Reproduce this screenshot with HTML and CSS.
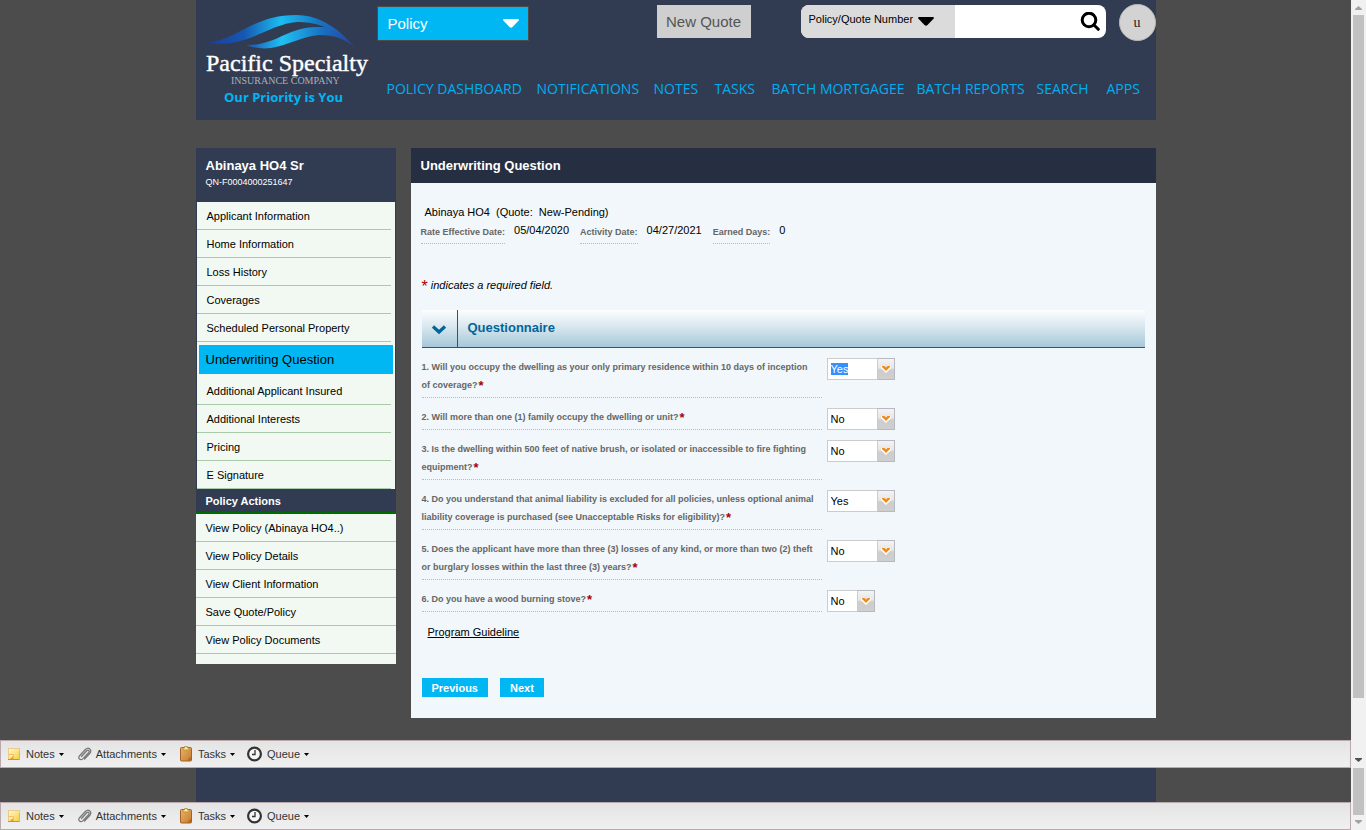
FILE: index.html
```html
<!DOCTYPE html>
<html lang="en">
<head>
<meta charset="utf-8">
<title>Underwriting Question</title>
<link rel="stylesheet" href="styles.css">
</head>
<body>
<svg class="defs" aria-hidden="true">
  <defs>
    <linearGradient id="noteFill" x1="0" y1="0" x2="1" y2="1"><stop offset="0" stop-color="#fffbd8"/><stop offset="1" stop-color="#f5cf3c"/></linearGradient>
    <linearGradient id="boardFill" x1="0" y1="0" x2="1" y2="1"><stop offset="0" stop-color="#e9b566"/><stop offset="1" stop-color="#c57c2c"/></linearGradient>
  </defs>
  <symbol id="i-note" viewBox="0 0 16 16">
    <rect x="2.5" y="2.5" width="11" height="11" fill="url(#noteFill)" stroke="#f0c988"/>
    <path d="M2 13.500h12" stroke="#e58a1c"/><path d="M13.500 5v9" stroke="#eeb25a"/>
    <path d="M2.500 8.500h5V13" fill="#fff3b0" stroke="#f0bf62"/>
    <path d="M4 13l3-3v3z" fill="#ef9f2e"/>
  </symbol>
  <symbol id="i-clip" viewBox="0 0 16 16">
    <path d="M5.500 10.500l5.200-5.700c1.600-1.500 3.300.2 1.900 1.800L7 12.600c-2.500 2.500-5.700-.2-3.400-2.900L9.400 3.500c2.900-3 7.300.2 4.500 3.700L8.500 13" fill="none" stroke="#777" stroke-width="1.300" stroke-linecap="round"/>
  </symbol>
  <symbol id="i-board" viewBox="0 0 16 16">
    <rect x="2.500" y="1.500" width="11" height="13.500" rx="1" fill="url(#boardFill)" stroke="#a4622a"/>
    <path d="M5 4V2h1.500V.5h3V2H11v2z" fill="#f7e69a" stroke="#b58a3a" stroke-width=".8"/>
    <path d="M9 14.500l4-4v4z" fill="#b26a28"/>
  </symbol>
  <symbol id="i-clock" viewBox="0 0 16 16">
    <circle cx="7.500" cy="8" r="6.400" fill="#f6f6f6" stroke="#333" stroke-width="2.200"/>
    <path d="M8 4v4.500H5" fill="none" stroke="#333" stroke-width="1.300"/>
  </symbol>
  <symbol id="i-caret" viewBox="0 0 5 3"><path d="M0 0h5L2.500 3z"/></symbol>
  <symbol id="i-arrow" viewBox="0 0 16 9"><path d="M1 0h14q1.500.5.500 1.800L9.500 8Q8 9.500 6.500 8L.5 1.800Q-.5.500 1 0z"/></symbol>
  <symbol id="i-drop" viewBox="0 0 10 8"><path d="M0 1h3l2 2 2-2h3v2L5 8 0 3z" fill="#fff"/><path d="M1 1h2.500L5 2.500 6.500 1H9v1L5 6 1 2z" fill="#ef8b17"/></symbol>
  <symbol id="i-scroll" viewBox="0 0 7 4"><path d="M0 0h7v1L3.500 4 0 1z"/></symbol>
</svg>

<div class="page">
  <div class="wrap">
    <header class="top">
      <svg class="logo" viewBox="0 0 182 120" role="img" aria-label="Pacific Specialty Insurance Company">
        <defs>
          <linearGradient id="waveA"><stop offset="0" stop-color="#1d3c9c"/><stop offset=".25" stop-color="#1657b0"/><stop offset=".5" stop-color="#1cbcf2"/><stop offset=".75" stop-color="#1577c4"/><stop offset="1" stop-color="#2747ab"/></linearGradient>
          <linearGradient id="waveB"><stop offset="0" stop-color="#1a4fae"/><stop offset=".33" stop-color="#20c0f4"/><stop offset=".7" stop-color="#1771c2"/><stop offset="1" stop-color="#2a3ea4"/></linearGradient>
        </defs>
        <path d="M11 42C38 42 56 15 100 15C126 15 145 31 159 48C150 38 140 32 129 27C119 23 110 22 101 22C72 24 47 51 11 42Z" fill="url(#waveA)"/>
        <path d="M50 45C79 46 92 27 120 27L129 27C142 31 153 40 159 48C150 39 139 35 123 35C98 37 79 56 50 45Z" fill="url(#waveB)"/>
        <text class="logo-name" x="10" y="71">Pacific Specialty</text>
        <text class="logo-sub" x="35" y="84">INSURANCE COMPANY</text>
        <text class="logo-tag" x="28" y="102">Our Priority is You</text>
      </svg>
      <div class="top-main">
        <div class="tools">
          <button class="policy" type="button">Policy <svg class="arrow"><use href="#i-arrow"/></svg></button>
          <button class="quote" type="button">New Quote</button>
          <form class="search">
            <button class="search-type" type="button">Policy/Quote Number <svg class="arrow"><use href="#i-arrow"/></svg></button>
            <input class="search-text" type="text" aria-label="Search">
            <button class="search-go" type="button" aria-label="Search"><svg viewBox="0 0 20 20"><circle cx="9" cy="8" r="6.800" fill="none" stroke="#000" stroke-width="3"/><path d="M14 13l4.300 4.300" stroke="#000" stroke-width="3" stroke-linecap="round"/></svg></button>
          </form>
          <button class="user" type="button">u</button>
        </div>
        <nav class="menu">
          <a href="#">POLICY DASHBOARD</a><a href="#">NOTIFICATIONS</a><a href="#">NOTES</a><a href="#">TASKS</a><a href="#">BATCH MORTGAGEE</a><a href="#">BATCH REPORTS</a><a href="#">SEARCH</a><a href="#">APPS</a>
        </nav>
      </div>
    </header>

    <div class="columns">
      <aside class="side">
        <div class="side-head"><strong>Abinaya HO4 Sr</strong><span>QN-F0004000251647</span></div>
        <nav class="steps">
          <a href="#">Applicant Information</a>
          <a href="#">Home Information</a>
          <a href="#">Loss History</a>
          <a href="#">Coverages</a>
          <a href="#">Scheduled Personal Property</a>
          <a href="#" class="current">Underwriting Question</a>
          <a href="#">Additional Applicant Insured</a>
          <a href="#">Additional Interests</a>
          <a href="#">Pricing</a>
          <a href="#">E Signature</a>
        </nav>
        <h2 class="side-title">Policy Actions</h2>
        <nav class="actions">
          <a href="#">View Policy (Abinaya HO4..)</a>
          <a href="#">View Policy Details</a>
          <a href="#">View Client Information</a>
          <a href="#">Save Quote/Policy</a>
          <a href="#">View Policy Documents</a>
        </nav>
      </aside>

      <main class="panel">
        <h1 class="panel-title">Underwriting Question</h1>
        <div class="panel-body">
          <p class="insured">Abinaya HO4&nbsp; (Quote:&nbsp; New-Pending)</p>
          <dl class="dates">
            <dt>Rate Effective Date:</dt><dd>05/04/2020</dd>
            <dt>Activity Date:</dt><dd>04/27/2021</dd>
            <dt>Earned Days:</dt><dd>0</dd>
          </dl>
          <p class="required"><span>*</span> indicates a required field.</p>
          <section>
            <div class="section-head">
              <button class="fold" type="button" aria-label="Collapse Questionnaire"><svg viewBox="0 0 16 10"><path d="M2 1.500l6 5.500 6-5.500" fill="none" stroke="#006699" stroke-width="3.200"/></svg></button>
              <h2>Questionnaire</h2>
            </div>
            <div class="questions">
              <div class="row"><label for="q1">1. Will you occupy the dwelling as your only primary residence within 10 days of inception of coverage?<b>*</b></label>
                <div class="combo"><input id="q1" type="text" value="Yes"><span class="trigger"><svg><use href="#i-drop"/></svg></span></div></div>
              <div class="row"><label for="q2">2. Will more than one (1) family occupy the dwelling or unit?<b>*</b></label>
                <div class="combo"><select id="q2"><option>No</option><option>Yes</option></select><span class="trigger"><svg><use href="#i-drop"/></svg></span></div></div>
              <div class="row"><label for="q3">3. Is the dwelling within 500 feet of native brush, or isolated or inaccessible to fire fighting equipment?<b>*</b></label>
                <div class="combo"><select id="q3"><option>No</option><option>Yes</option></select><span class="trigger"><svg><use href="#i-drop"/></svg></span></div></div>
              <div class="row"><label for="q4">4. Do you understand that animal liability is excluded for all policies, unless optional animal liability coverage is purchased (see Unacceptable Risks for eligibility)?<b>*</b></label>
                <div class="combo"><select id="q4"><option>Yes</option><option>No</option></select><span class="trigger"><svg><use href="#i-drop"/></svg></span></div></div>
              <div class="row"><label for="q5">5. Does the applicant have more than three (3) losses of any kind, or more than two (2) theft or burglary losses within the last three (3) years?<b>*</b></label>
                <div class="combo"><select id="q5"><option>No</option><option>Yes</option></select><span class="trigger"><svg><use href="#i-drop"/></svg></span></div></div>
              <div class="row"><label for="q6">6. Do you have a wood burning stove?<b>*</b></label>
                <div class="combo small"><select id="q6"><option>No</option><option>Yes</option></select><span class="trigger"><svg><use href="#i-drop"/></svg></span></div></div>
            </div>
          </section>
          <p class="guide"><a href="#">Program Guideline</a></p>
          <div class="buttons"><button type="button">Previous</button><button type="button">Next</button></div>
        </div>
      </main>
    </div>
  </div>

  <div class="bar">
    <button type="button"><svg class="icon"><use href="#i-note"/></svg>Notes<svg class="caret"><use href="#i-caret"/></svg></button>
    <button type="button"><svg class="icon"><use href="#i-clip"/></svg>Attachments<svg class="caret"><use href="#i-caret"/></svg></button>
    <button type="button"><svg class="icon"><use href="#i-board"/></svg>Tasks<svg class="caret"><use href="#i-caret"/></svg></button>
    <button type="button"><svg class="icon"><use href="#i-clock"/></svg>Queue<svg class="caret"><use href="#i-caret"/></svg></button>
  </div>
  <div class="footer"></div>
  <div class="bar">
    <button type="button"><svg class="icon"><use href="#i-note"/></svg>Notes<svg class="caret"><use href="#i-caret"/></svg></button>
    <button type="button"><svg class="icon"><use href="#i-clip"/></svg>Attachments<svg class="caret"><use href="#i-caret"/></svg></button>
    <button type="button"><svg class="icon"><use href="#i-board"/></svg>Tasks<svg class="caret"><use href="#i-caret"/></svg></button>
    <button type="button"><svg class="icon"><use href="#i-clock"/></svg>Queue<svg class="caret"><use href="#i-caret"/></svg></button>
  </div>
</div>

<div class="scrollbars" aria-hidden="true">
  <div class="track track-main">
    <svg class="up"><use href="#i-scroll"/></svg><div class="thumb"></div><svg class="down"><use href="#i-scroll"/></svg>
  </div>
  <div class="track track-end">
    <div class="thumb"></div><svg class="off"><use href="#i-scroll"/></svg>
  </div>
</div>
<script src="app.js"></script>
</body>
</html>
```
FILE: styles.css
```css
* { box-sizing: border-box; }
body {
  margin: 0;
  min-height: 100vh;
  display: grid;
  grid-template-columns: 1fr 15px;
  background: #4c4c4c;
  color: #000;
  font: 11px/18px "Liberation Sans", Arial, sans-serif;
}
button, input, select { font: inherit; color: inherit; margin: 0; padding: 0; border: 0; border-radius: 0; background: none; }
h1, h2, p, dl, dd { margin: 0; }
a { color: inherit; text-decoration: none; }
.defs { position: absolute; width: 0; height: 0; }

.page { display: flex; flex-direction: column; min-width: 0; }
.wrap { width: 100%; max-width: 960px; margin: 0 auto; flex: 1; padding-bottom: 22px; }

/* Header */
.top { display: flex; height: 120px; background: #313c53; }
.logo { width: 182px; height: 120px; flex: none; }
.logo-name { font: 24px "Liberation Serif", serif; fill: #fff; stroke: #fff; stroke-width: .4; }
.logo-sub { font: 10px "Liberation Serif", serif; fill: #a9b0bc; }
.logo-tag { font: bold 13px "Open Sans", sans-serif; fill: #00b6f4; }
.top-main { flex: 1; min-width: 0; }
.tools { display: flex; padding-top: 4px; }
.arrow { width: 16px; height: 9px; }
.policy {
  display: flex; align-items: center; justify-content: space-between;
  width: 150px; height: 33px; margin-top: 3px; padding: 0 9px 0 10px;
  background: #00b7f4; color: #fff; fill: #fff; font-size: 15px; outline: 1px solid #4c4c4c;
}
.quote { width: 94px; height: 33px; margin: 1px 0 0 129px; background: #cfcfcf; color: #555; font-size: 15px; }
.search { display: flex; flex: 1; height: 33px; margin: 1px 13px 0 50px; border-radius: 8px; overflow: hidden; background: #fff; }
.search-type { display: flex; gap: 5px; width: 154px; padding: 5px 0 0 8px; background: #dbdbdb; }
.search-type .arrow { margin-top: 7px; }
.search-text { flex: 1; min-width: 0; padding: 0 8px; outline: 0; }
.search-go { width: 26px; display: flex; align-items: center; }
.search-go svg { width: 20px; height: 20px; }
.user { width: 37px; height: 37px; border-radius: 50%; background: #d3d3d3; border: 1px solid #bbb; color: #222; font: 14px "Liberation Serif", serif; }
.menu {
  display: grid; grid-template-columns: 150px 117px 61px 57px 145px 120px 70px auto;
  padding: 38px 0 0 9px;
  color: #00aeee; font: 14px/20px "Open Sans", sans-serif; white-space: nowrap;
}

/* Sidebar */
.columns { display: flex; align-items: flex-start; gap: 15px; margin-top: 28px; }
.side { width: 200px; flex: none; background: #f2f8f2; padding-bottom: 10px; }
.side-head { height: 54px; padding: 9px 10px; background: #313c53; color: #fff; }
.side-head strong, .side-head span { display: block; }
.side-head strong { font-size: 13px; }
.side-head span { font-size: 9px; line-height: 14px; }
.steps { border: solid #313c53; border-width: 0 1px; }
.steps a, .actions a { display: block; height: 28px; padding-left: 10px; line-height: 28px; border-bottom: 1px solid #a9cbaa; }
.steps a { margin-right: 4px; }
.steps .current { height: 29px; margin: 3px 2px; padding-left: 7px; border: 0; background: #00b7f4; font-size: 13px; line-height: 30px; }
.side-title { height: 25px; padding-left: 10px; background: #313c53; border-bottom: 2px solid #006b00; color: #fff; font-size: 11px; line-height: 24px; }

/* Main panel */
.panel { flex: 1; min-width: 0; background: #f1f7fa; }
.panel-title { height: 35px; padding-left: 10px; background: #262f42; color: #fff; font-size: 13px; line-height: 35px; }
.panel-body { padding: 20px 11px 21px; }
.insured { padding-left: 3px; }
.dates { display: flex; margin-left: -1px; }
.dates dt { height: 23px; padding-top: 2px; border-bottom: 1px dotted #bbb; color: #666; font-weight: bold; font-size: 9px; }
.dates dd { padding: 0 11px 0 9px; }
.required { margin-top: 32px; font-style: italic; }
.required span { color: #a00; font-size: 16px; font-style: normal; vertical-align: -3px; line-height: 1; }
.section-head {
  display: flex; height: 38px; margin-top: 15px;
  background: linear-gradient(#fcfefe, #d4e4ed 50%, #a5c8d9);
  border-bottom: 1px solid #006699;
}
.fold { width: 36px; padding-top: 4px; border-right: 1px solid #006699; }
.fold svg { width: 16px; height: 10px; }
.section-head h2 { padding-left: 10px; color: #006699; font-size: 13px; line-height: 35px; }
.questions { display: flex; flex-direction: column; gap: 10px; margin-top: 10px; }
.row { display: flex; align-items: flex-start; gap: 5px; }
.row label { width: 400px; padding: 0 5px 3px 0; border-bottom: 1px dotted #bbb; color: #666; font-weight: bold; font-size: 9px; }
.row label b { padding-left: 1px; color: #a00; font-size: 13px; line-height: 1; vertical-align: -2px; }
.combo { display: flex; width: 68px; height: 22px; position: relative; background: #fff; border: 1px solid #ccc; }
.combo.small { width: 48px; }
.combo input, .combo select { flex: 1; min-width: 0; width: 100%; height: 20px; padding: 0 0 0 3px; appearance: none; outline: 0; }
.combo input::selection { background: #3390ff; color: #fff; }
.trigger {
  position: absolute; right: -1px; top: -1px; width: 18px; height: 22px;
  display: flex; align-items: flex-start; justify-content: center; padding-top: 6px;
  background: linear-gradient(#f4f4f4, #e6e6e6 45%, #cdcdcd 55%, #cfcfcf);
  border: 1px solid #b8b8c2; border-left-color: #ccc; pointer-events: none;
}
.trigger svg { width: 10px; height: 8px; }
.guide { margin-top: 11px; padding-left: 6px; }
.guide a { text-decoration: underline; }
.buttons { display: flex; gap: 12px; margin-top: 37px; }
.buttons button { height: 19px; padding: 0 10px; background: #00b7f4; color: #fff; font-weight: bold; }

/* Bottom bars */
.bar {
  display: flex; gap: 12px; height: 28px; padding-left: 5px;
  border: 1px solid #b9a9ac; background: linear-gradient(#e4e4e4, #f0f0f0); color: #333;
}
.bar button { display: flex; align-items: center; gap: 4px; }
.bar .icon { width: 16px; height: 16px; }
.bar .caret { width: 5px; height: 3px; fill: #000; }
.footer { width: 100%; max-width: 960px; height: 34px; margin: 0 auto; background: #313c53; }

/* Scrollbars */
.scrollbars { display: flex; flex-direction: column; background: #f1f1f1; }
.track { display: flex; flex-direction: column; align-items: center; gap: 5px; }
.track svg { width: 7px; height: 4px; flex: none; }
.track-main { flex: 1; padding: 6px 0; }
.track-main .thumb { flex: 1; margin-bottom: 55px; }
.track-end { height: 62px; padding-bottom: 6px; }
.track-end .thumb { flex: 1; }
.thumb { width: 11px; background: #c1c1c1; }
.up { transform: rotate(180deg); fill: #a3a3a3; }
.down { fill: #505050; }
.off { fill: #a3a3a3; }
```
FILE: app.js
```js
const first = document.getElementById('q1');
first.focus();
first.select();
```
